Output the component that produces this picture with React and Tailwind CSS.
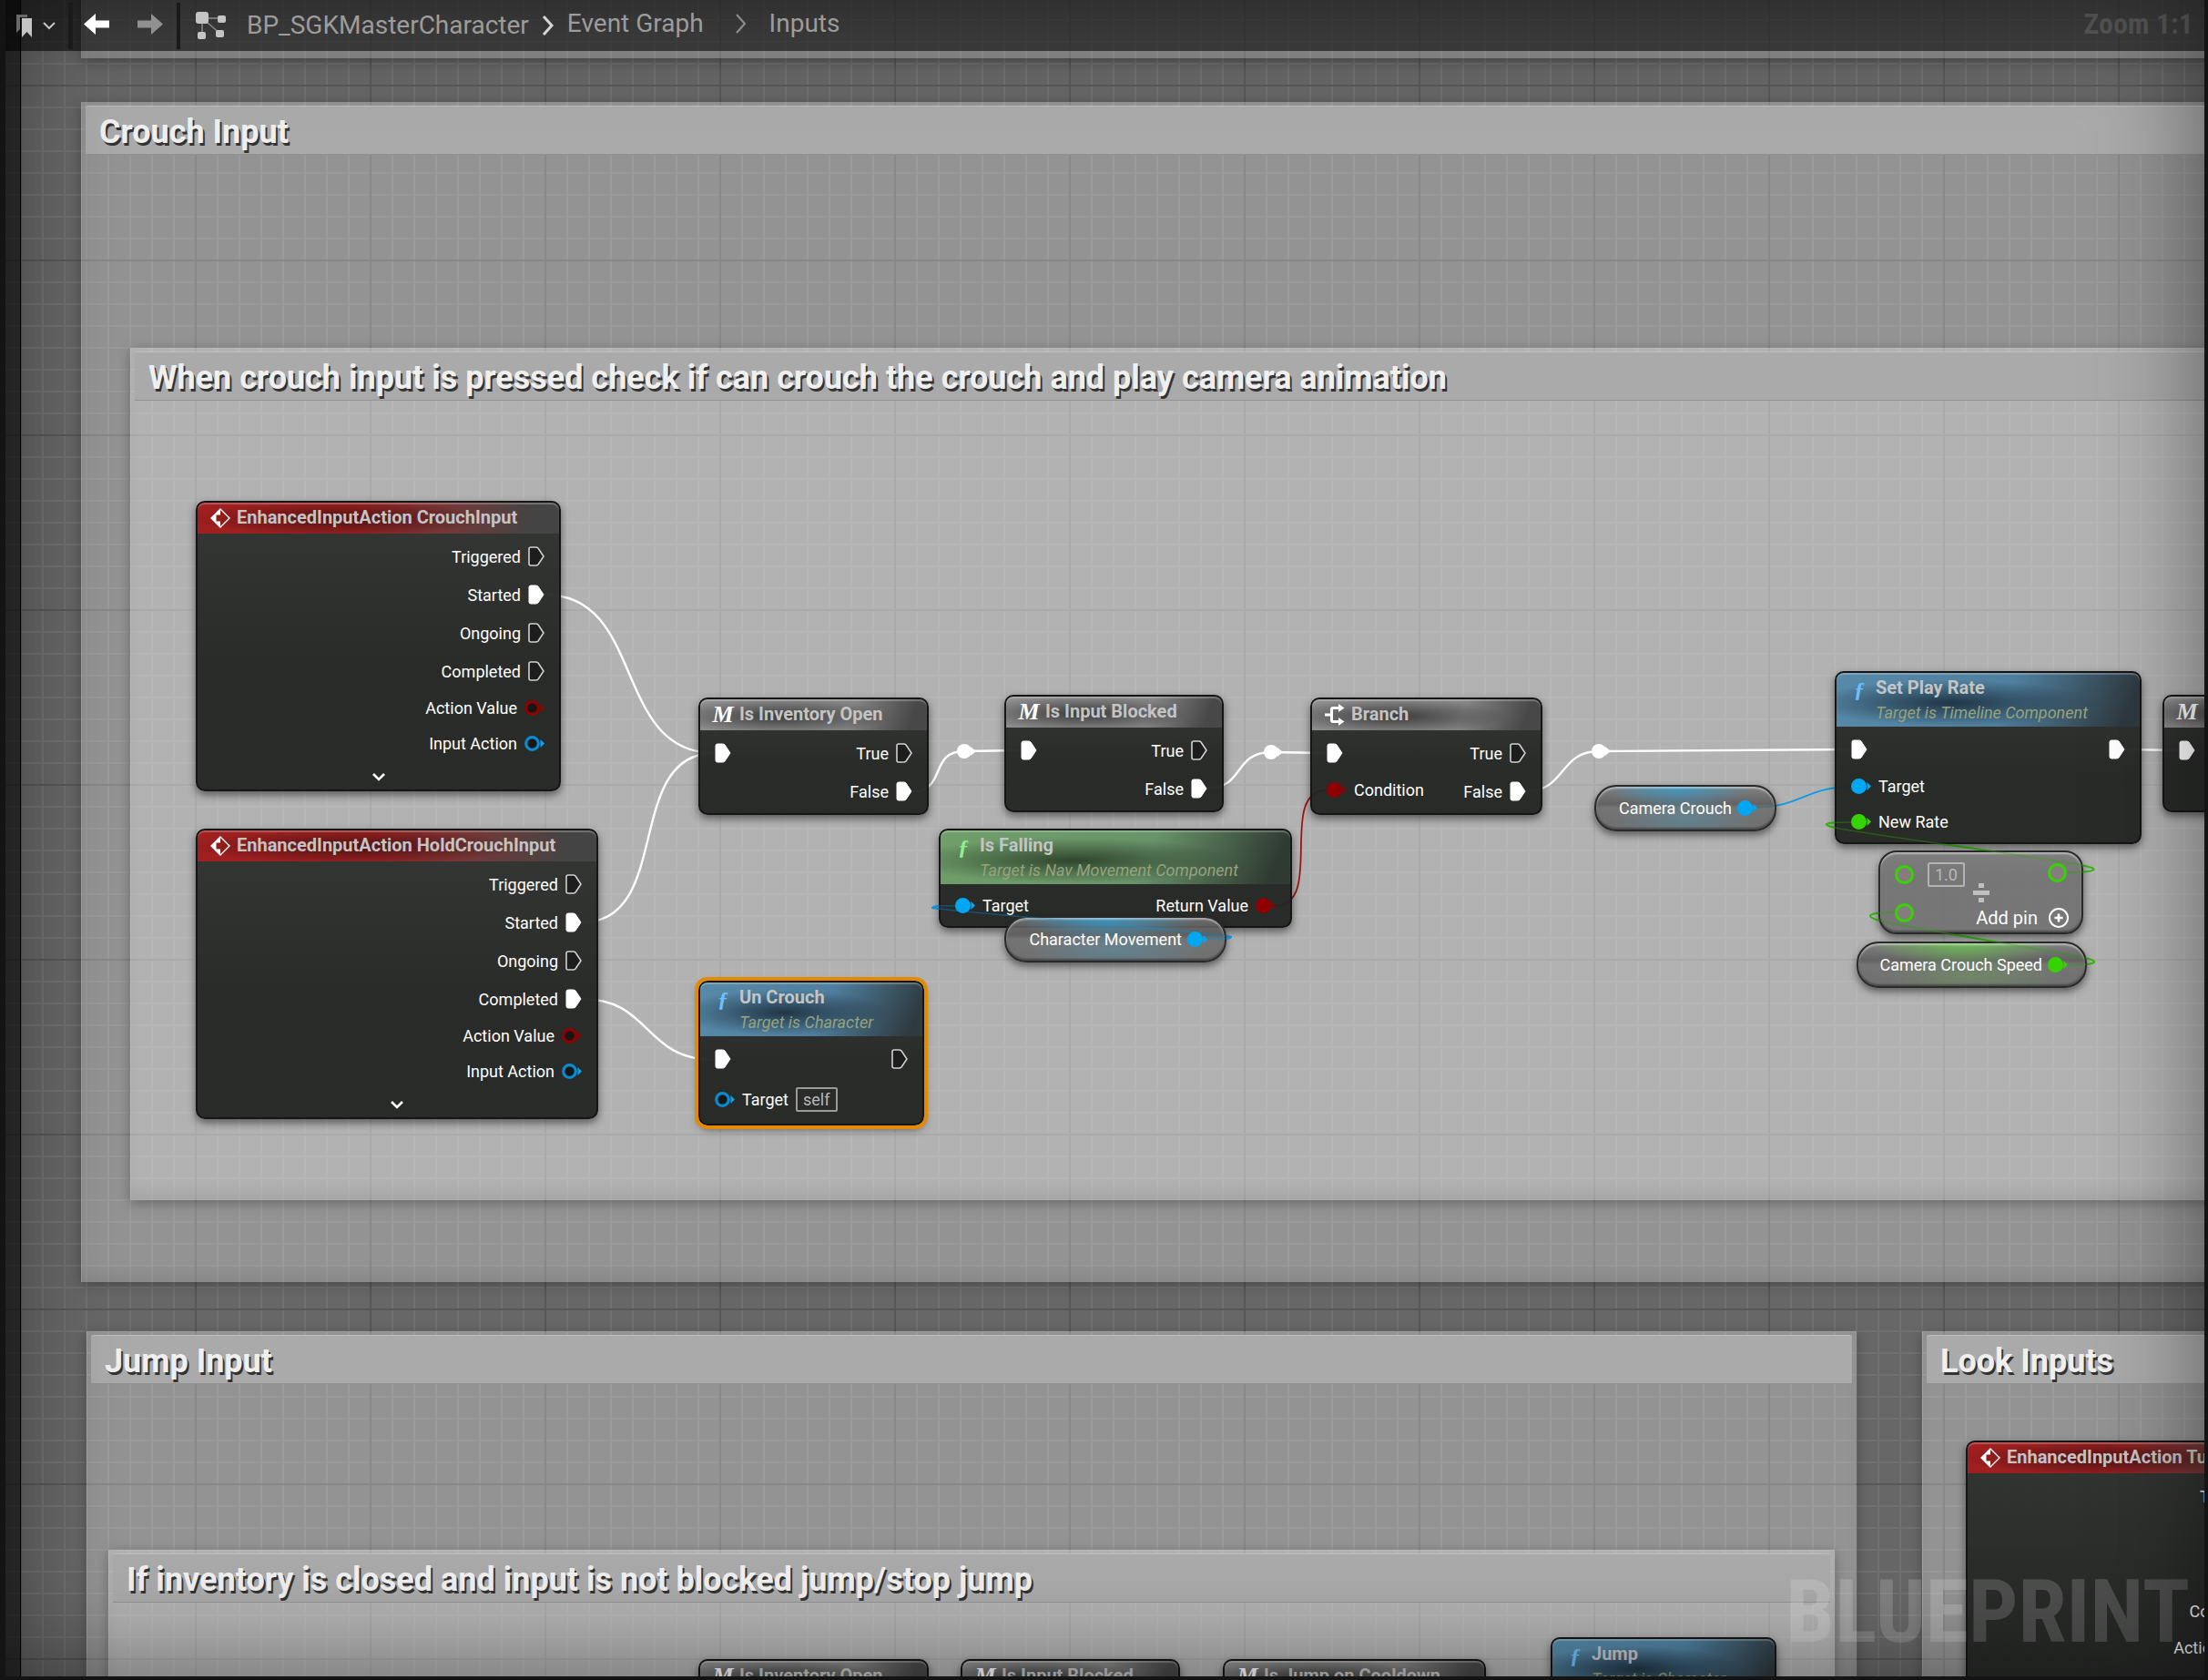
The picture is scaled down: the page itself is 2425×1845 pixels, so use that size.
import React from "react";

const comments = [
  { x: 89, y: -320, w: 2560, h: 384 },
  { title: "Crouch Input", x: 89, y: 112, w: 2560, h: 1296 },
  { title: "When crouch input is pressed check if can crouch the crouch and play camera animation", x: 143, y: 382, w: 2440, h: 936 },
  { title: "Jump Input", x: 95, y: 1462, w: 1944, h: 620 },
  { title: "If inventory is closed and input is not blocked jump/stop jump", x: 119, y: 1702, w: 1896, h: 340 },
  { title: "Look Inputs", x: 2111, y: 1462, w: 700, h: 620 },
];

const actionPins = (linked) => [
  ...["Triggered", "Started", "Ongoing", "Completed"].map((label) => ({
    label,
    kind: "exec",
    on: linked.includes(label),
  })),
  { label: "Action Value", kind: "red" },
  { label: "Input Action", kind: "blue" },
];

const trueFalse = [
  { label: "True", kind: "exec" },
  { label: "False", kind: "exec", on: true },
];

const execIn = { kind: "exec", on: true };

const nodes = [
  { id: "crouch", type: "event", title: "EnhancedInputAction CrouchInput", x: 215, y: 550, w: 401, right: actionPins(["Started"]) },
  { id: "hold", type: "event", title: "EnhancedInputAction HoldCrouchInput", x: 215, y: 910, w: 442, right: actionPins(["Started", "Completed"]) },
  { id: "turn", type: "event", title: "EnhancedInputAction TurnInput", x: 2159, y: 1582, w: 377, right: actionPins([]) },
  { id: "inv", type: "macro", title: "Is Inventory Open", x: 767, y: 766, w: 253, left: [execIn], right: trueFalse },
  { id: "blocked", type: "macro", title: "Is Input Blocked", x: 1103, y: 763, w: 241, left: [execIn], right: trueFalse },
  {
    id: "branch", type: "branch", title: "Branch", x: 1439, y: 766, w: 255,
    left: [execIn, { label: "Condition", kind: "red", on: true }],
    right: trueFalse,
  },
  {
    id: "rate", type: "func", title: "Set Play Rate", sub: "Target is Timeline Component", x: 2015, y: 737, w: 337,
    left: [execIn, { label: "Target", kind: "blue", on: true }, { label: "New Rate", kind: "green", on: true }],
    right: [{ kind: "exec", on: true }],
  },
  { id: "next", type: "macro", title: "Is Input Blocked", x: 2375, y: 763, w: 241, left: [execIn], right: trueFalse },
  {
    id: "falling", type: "pure", title: "Is Falling", sub: "Target is Nav Movement Component", x: 1031, y: 910, w: 388,
    left: [{ label: "Target", kind: "blue", on: true }],
    right: [{ label: "Return Value", kind: "red", on: true }],
  },
  {
    id: "uncrouch", type: "func", title: "Un Crouch", sub: "Target is Character", x: 767, y: 1077, w: 248, selected: true,
    left: [execIn, { label: "Target", kind: "blue", field: "self" }],
    right: [{ kind: "exec" }],
  },
  { id: "inv2", type: "macro", title: "Is Inventory Open", x: 767, y: 1822, w: 253, left: [execIn], right: trueFalse },
  { id: "blocked2", type: "macro", title: "Is Input Blocked", x: 1055, y: 1822, w: 241, left: [execIn], right: trueFalse },
  { id: "cooldown", type: "macro", title: "Is Jump on Cooldown", x: 1343, y: 1822, w: 289, left: [execIn], right: trueFalse },
  {
    id: "jump", type: "func", title: "Jump", sub: "Target is Character", x: 1703, y: 1798, w: 248,
    left: [execIn], right: [{ kind: "exec" }],
  },
];

const variables = [
  { label: "Character Movement", kind: "blue", x: 1103, y: 1006, w: 244 },
  { label: "Camera Crouch", kind: "blue", x: 1751, y: 862, w: 200 },
  { label: "Camera Crouch Speed", kind: "green", x: 2039, y: 1034, w: 253 },
];

const wires = [
  { color: "#ffffff", width: 2.4, d: "M598 653C710 653 672 827 785 827" },
  { color: "#ffffff", width: 2.4, d: "M639 1013C740 1013 684 827 785 827" },
  { color: "#ffffff", width: 2.4, d: "M639 1097C716 1097 706 1164 785 1164" },
  { color: "#ffffff", width: 2.4, d: "M1002 869C1040 869 1020 825 1059 825L1121 824" },
  { color: "#ffffff", width: 2.4, d: "M1326 866C1366 866 1355 826 1396 826L1457 827" },
  { color: "#ffffff", width: 2.4, d: "M1676 869C1720 869 1712 825 1756 825L2033 823" },
  { color: "#ffffff", width: 2.4, d: "M2334 823L2393 824" },
  { color: "#a01414", width: 1.8, d: "M1400 995C1456 995 1402 868 1457 868" },
  { color: "#0c9ce8", width: 1.8, d: "M1928 887C1975 887 1985 864 2033 864" },
];

// links that run backwards loop over the nodes, so they stay faintly visible on top
const loops = [
  { color: "#0c9ce8", d: "M1323 1031Q1352 1032 1352 1029C1340 1024 1040 1001 1024 997Q1024 994 1049 995" },
  { color: "#35b80c", d: "M2270 958C2304 958 2308 954 2285 950C2230 940 2080 920 2020 910C1996 905 2004 903 2033 903" },
  { color: "#35b80c", d: "M2270 1060C2306 1060 2308 1055 2285 1051C2230 1040 2120 1023 2068 1012C2044 1006 2052 1002 2081 1002" },
];

const knots = [[1059, 825], [1396, 826], [1756, 825]];

const headerTone = {
  event:
    "bg-[radial-gradient(ellipse_42%_55%_at_40%_52%,rgba(50,12,12,0.75),transparent),linear-gradient(100deg,#a01f1f_0%,#9a2222_45%,#6e3a3a_72%,#434443_92%)]",
  macro:
    "bg-[radial-gradient(ellipse_50%_55%_at_35%_55%,rgba(45,45,45,0.85),transparent),linear-gradient(110deg,#8e8e8e_0%,#858585_65%,#484848_92%)]",
  branch:
    "bg-[radial-gradient(ellipse_50%_55%_at_35%_55%,rgba(45,45,45,0.85),transparent),linear-gradient(110deg,#8e8e8e_0%,#858585_65%,#484848_92%)]",
  func:
    "bg-[radial-gradient(ellipse_48%_42%_at_38%_56%,rgba(28,45,60,0.9),transparent),linear-gradient(115deg,#5789a8_0%,#4f7f9e_55%,#2f3a40_94%)]",
  pure:
    "bg-[radial-gradient(ellipse_48%_42%_at_38%_56%,rgba(45,65,42,0.95),transparent),linear-gradient(115deg,#6f9f6a_0%,#69946a_58%,#2f3a32_94%)]",
};

const ringColor = { red: "#900000", blue: "#0a8bd0", green: "#35d400" };
const fillColor = { red: "#900000", blue: "#00a8f3", green: "#35d400" };

function ExecPin({ on }) {
  return (
    <svg width="18" height="22" viewBox="0 0 18 22" className="shrink-0">
      <path
        d="M1 3Q1 1 3 1H8.500Q10 1 11 2L17 11L11 20Q10 21 8.500 21H3Q1 21 1 19Z"
        fill={on ? "#fff" : "#1c1d1c"}
        stroke={on ? "#fff" : "#d0d0d0"}
        strokeWidth={on ? 1 : 1.6}
      />
    </svg>
  );
}

function DataPin({ kind, on }) {
  return (
    <svg width="22" height="17" viewBox="0 0 22 17" className="shrink-0">
      <path d="M17.500 4L22 8.500L17.500 13Z" fill={fillColor[kind]} />
      <circle
        cx="8.500"
        cy="8.500"
        r={on ? 8.5 : 6.8}
        fill={on ? fillColor[kind] : "#151716"}
        stroke={on ? "none" : ringColor[kind]}
        strokeWidth="3.200"
      />
    </svg>
  );
}

function Pin({ pin, side }) {
  const exec = pin.kind === "exec";
  return (
    <div
      className={`flex items-center gap-2 ${side === "right" ? "flex-row-reverse" : ""} ${
        exec ? "h-[42px]" : pin.field ? "h-[47px]" : "h-[39px]"
      }`}
    >
      {exec ? <ExecPin on={pin.on} /> : <DataPin kind={pin.kind} on={pin.on} />}
      {pin.label && <span>{pin.label}</span>}
      {pin.field && (
        <span className="flex h-[27px] items-center rounded-xs border-2 border-[#9a9a9a] px-[6px] text-[#b8b8b8]">
          {pin.field}
        </span>
      )}
    </div>
  );
}

function NodeIcon({ type }) {
  if (type === "event") {
    return (
      <svg width="22" height="22" viewBox="0 0 22 22" className="shrink-0">
        <path d="M11 1L21 11L11 21L1 11Z" fill="none" stroke="#fff" strokeWidth="1.400" />
        <path d="M11 1V7.500H6.500V14.500H11V21L1 11Z" fill="#fff" />
      </svg>
    );
  }
  if (type === "branch") {
    return (
      <svg width="22" height="24" viewBox="0 0 22 24" className="shrink-0" fill="none" stroke="#fff" strokeWidth="3">
        <path d="M0 12H7M16 4.500H9Q7.500 4.500 7.500 6V18Q7.500 19.500 9 19.500H16" />
        <path d="M15 0L21.500 4.500L15 9ZM15 15L21.500 19.500L15 24Z" fill="#fff" stroke="none" />
      </svg>
    );
  }
  if (type === "macro") {
    return (
      <span className="flex w-[22px] shrink-0 justify-center font-['Liberation_Serif',serif] text-[26px] leading-none font-bold text-white italic">
        M
      </span>
    );
  }
  return (
    <span
      className={`w-[22px] shrink-0 text-center font-['Liberation_Serif',serif] text-[24px] leading-none font-bold italic ${
        type === "pure" ? "text-[#8df08d]" : "text-[#6cc0fa]"
      }`}
    >
      ƒ
    </span>
  );
}

function Node({ node }) {
  return (
    <article
      className={`absolute rounded-[10px] border-2 border-[#141514] bg-linear-to-b from-[#303230]/96 to-[#222422]/95 to-60% shadow-[0_4px_10px_rgba(0,0,0,0.5)] ${
        node.selected ? "outline-4 outline-[#e38a00]" : ""
      }`}
      style={{ left: node.x, top: node.y, width: node.w }}
    >
      <header
        className={`flex gap-[7px] overflow-hidden rounded-t-lg pr-4 pl-[14px] shadow-[inset_0_2px_1px_rgba(255,255,255,0.25)] ${
          headerTone[node.type]
        } ${node.sub ? "h-[59px]" : "h-[34px]"}`}
      >
        <div className={`flex items-center ${node.sub ? "h-[36px]" : ""}`}>
          <NodeIcon type={node.type} />
        </div>
        <div className="pt-px whitespace-nowrap">
          <h3 className="text-[20px] leading-[30px] font-bold text-[#c4c4c4]">{node.title}</h3>
          {node.sub && <p className="text-[18px] leading-[26px] text-[#97a27c] italic">{node.sub}</p>}
        </div>
      </header>
      <div className="flex justify-between px-4 pt-1 pb-[3px] text-[18px] whitespace-nowrap text-white">
        <div>{node.left?.map((pin, i) => <Pin key={i} pin={pin} side="left" />)}</div>
        <div>{node.right?.map((pin, i) => <Pin key={i} pin={pin} side="right" />)}</div>
      </div>
      {node.type === "event" && (
        <button type="button" aria-label="Show more pins" className="flex h-7 w-full items-center justify-center">
          <svg width="14" height="9" viewBox="0 0 14 9" fill="none" stroke="#fff" strokeWidth="2.600">
            <path d="M1 1L7 7L13 1" />
          </svg>
        </button>
      )}
    </article>
  );
}

const pill =
  "absolute border-2 border-[#2a2a2a] shadow-[0_4px_9px_rgba(0,0,0,0.5),inset_0_2px_2px_rgba(255,255,255,0.45),inset_0_-2px_2px_rgba(0,0,0,0.35)]";

const pillTone = {
  blue: "bg-[radial-gradient(ellipse_42%_50%_at_46%_0%,rgba(60,150,195,0.95),transparent),radial-gradient(ellipse_40%_50%_at_50%_75%,rgba(80,150,180,0.45),transparent),linear-gradient(rgba(120,120,120,0.85),rgba(85,85,85,0.85)_40%,rgba(105,105,105,0.85)_50%,rgba(100,100,100,0.85))]",
  green: "bg-[radial-gradient(ellipse_42%_50%_at_46%_0%,rgba(105,190,80,0.95),transparent),radial-gradient(ellipse_40%_50%_at_50%_75%,rgba(110,160,90,0.45),transparent),linear-gradient(rgba(120,120,120,0.85),rgba(85,85,85,0.85)_40%,rgba(105,105,105,0.85)_50%,rgba(100,100,100,0.85))]",
};

function Variable({ item }) {
  return (
    <div
      className={`${pill} ${pillTone[item.kind]} flex h-[51px] items-center justify-end gap-[6px] rounded-3xl pr-[19px] text-[18px] whitespace-nowrap text-white`}
      style={{ left: item.x, top: item.y, width: item.w }}
    >
      <span>{item.label}</span>
      <DataPin kind={item.kind} on />
    </div>
  );
}

function RingPin() {
  return <span className="size-[21px] rounded-full border-[3px] border-[#35d400] bg-[#857d7d]" />;
}

function DivideNode() {
  return (
    <div
      className={`${pill} top-[934px] left-[2063px] flex h-[92px] w-[225px] justify-between rounded-[20px] bg-linear-to-b from-[#787878]/90 via-[#6c6c6c]/85 via-30% to-[#6c6c6c]/85 px-4`}
    >
      <div className="flex flex-col">
        <div className="flex h-[48px] items-center gap-[15px]">
          <RingPin />
          <input
            aria-label="Dividend"
            defaultValue="1.0"
            className="h-[27px] w-[41px] rounded-xs border-2 border-[#b4b4b4] bg-transparent text-center text-[18px] text-[#b8b8b8]"
          />
        </div>
        <div className="flex h-9 items-center">
          <RingPin />
        </div>
      </div>
      <svg width="18" height="21" viewBox="0 0 18 21" fill="#c0c0c0" className="absolute top-[34px] left-[102px]">
        <path d="M0 8H18V13H0ZM6 0H12V5H6ZM6 16H12V21H6Z" />
      </svg>
      <div className="flex flex-col items-end justify-between pb-1">
        <div className="flex h-[44px] items-center">
          <RingPin />
        </div>
        <button type="button" className="-mr-[2px] flex h-6 items-center gap-3 text-[20px] text-white">
          Add pin
          <svg width="22" height="22" viewBox="0 0 22 22" fill="none" stroke="#fff" strokeWidth="2">
            <circle cx="11" cy="11" r="10" />
            <path d="M11 6.500V15.500M6.500 11H15.500" strokeWidth="2.600" />
          </svg>
        </button>
      </div>
    </div>
  );
}

function Comment({ item }) {
  return (
    <section
      className="absolute bg-white/29 px-[5px] pt-1 shadow-[0_3px_12px_rgba(0,0,0,0.3),inset_0_-14px_20px_-8px_rgba(0,0,0,0.1),inset_1px_0_0_rgba(255,255,255,0.12)]"
      style={{ left: item.x, top: item.y, width: item.w, height: item.h }}
    >
      {item.title && (
        <div className="flex h-[54px] items-center rounded-t-[3px] border-t border-b border-t-[#bebebe] border-b-[#929292] bg-[#aaaaaa] px-[15px] pt-1">
          <h2 className="text-[36px] leading-none font-bold whitespace-nowrap text-[#efefef] [text-shadow:2px_3px_0_#333]">
            {item.title}
          </h2>
        </div>
      )}
    </section>
  );
}

function Toolbar() {
  return (
    <nav className="absolute inset-x-0 top-0 flex h-14 items-center bg-black/56 pr-4 pl-[18px] text-[28px] leading-none whitespace-nowrap text-[#9c9c9c]">
      <button type="button" aria-label="Bookmarks" className="flex items-center gap-3">
        <svg width="17" height="25" viewBox="0 0 17 25">
          <path d="M0 0H12V3H4V16L0 20Z" fill="#6a6a6a" />
          <path d="M6 4H17V25L11.500 19L6 25Z" fill="#c4c4c4" />
        </svg>
        <svg width="14" height="9" viewBox="0 0 14 9" fill="none" stroke="#c4c4c4" strokeWidth="2">
          <path d="M1 1L7 7L13 1" />
        </svg>
      </button>
      <span className="ml-[14px] h-[51px] w-[5px] bg-[#1a1a1a]" />
      <button type="button" aria-label="Back" className="ml-3 pb-1">
        <svg width="28" height="23" viewBox="0 0 28 23" fill="#fff">
          <path d="M0 11.500L13 0V7.500H28V15.500H13V23Z" />
        </svg>
      </button>
      <button type="button" aria-label="Forward" className="ml-[31px] pb-1">
        <svg width="28" height="23" viewBox="0 0 28 23" fill="#909090">
          <path d="M28 11.500L15 0V7.500H0V15.500H15V23Z" />
        </svg>
      </button>
      <span className="ml-[15px] h-[51px] w-1 bg-[#1a1a1a]" />
      <svg width="33" height="30" viewBox="0 0 33 30" fill="#c4c4c4" className="ml-[17px]">
        <path d="M7 6V24M7 7H28M7 7L27 24" stroke="#8a8a8a" strokeWidth="1.500" />
        <rect width="14" height="13" rx="3" />
        <rect x="24" y="4" width="9" height="8" rx="2" />
        <rect x="2" y="22" width="9" height="8" rx="2" />
        <rect x="22" y="20" width="9" height="8" rx="2" />
      </svg>
      <button type="button" className="ml-[23px] pb-px">BP_SGKMasterCharacter</button>
      <svg width="14" height="22" viewBox="0 0 14 22" fill="none" stroke="#d6d6d6" strokeWidth="3" className="ml-[14px]">
        <path d="M2 1L11 11L2 21" />
      </svg>
      <button type="button" className="ml-[14px] pb-1">Event Graph</button>
      <svg width="14" height="22" viewBox="0 0 14 22" fill="none" stroke="#909090" strokeWidth="2" className="mb-1 ml-[34px]">
        <path d="M2 1L11 11L2 21" />
      </svg>
      <button type="button" className="ml-6 pb-1">Inputs</button>
      <span className="ml-auto pb-[5px] font-['Roboto_Condensed','Liberation_Sans_Narrow',Roboto,sans-serif] text-[32px] font-bold text-white/12">
        Zoom 1:1
      </span>
    </nav>
  );
}

export default function App() {
  return (
    <main className="relative h-screen w-full overflow-hidden bg-[#676767] font-[Roboto,'Noto_Sans',sans-serif]">
      <svg className="absolute inset-0 size-full">
        <defs>
          <pattern id="minor" x="22" y="93" width="24" height="24" patternUnits="userSpaceOnUse">
            <path d="M0 0H24V2H2V24H0Z" fill="#717171" />
          </pattern>
          <pattern id="major" x="22" y="93" width="192" height="192" patternUnits="userSpaceOnUse">
            <path d="M0 0H192V2H2V192H0Z" fill="#585858" />
          </pattern>
        </defs>
        <rect width="100%" height="100%" fill="url(#minor)" />
        <rect width="100%" height="100%" fill="url(#major)" />
      </svg>

      {comments.map((item, i) => (
        <Comment key={i} item={item} />
      ))}

      <svg className="absolute inset-0 size-full" fill="none">
        {wires.map((wire) => (
          <path key={wire.d} d={wire.d} stroke={wire.color} strokeWidth={wire.width} />
        ))}
        {loops.map((wire) => (
          <path key={wire.d} d={wire.d} stroke={wire.color} strokeWidth="2" />
        ))}
        {knots.map(([x, y]) => (
          <g key={x} fill="#fff">
            <path d={`M${x + 7} ${y - 5}L${x + 13} ${y}L${x + 7} ${y + 5}Z`} />
            <circle cx={x} cy={y} r="8" />
          </g>
        ))}
      </svg>

      {nodes.map((node) => (
        <Node key={node.id} node={node} />
      ))}
      <DivideNode />
      {variables.map((item) => (
        <Variable key={item.label} item={item} />
      ))}

      <svg className="pointer-events-none absolute inset-0 size-full opacity-35" fill="none">
        {loops.map((wire) => (
          <path key={wire.d} d={wire.d} stroke={wire.color} strokeWidth="1.500" />
        ))}
      </svg>

      <p className="absolute right-5 bottom-[27px] font-['Roboto_Condensed','Liberation_Sans_Narrow',Roboto,sans-serif] text-[96px] leading-none font-bold text-white/17">
        BLUEPRINT
      </p>

      <div className="pointer-events-none absolute inset-y-0 left-0 w-[23px] border-r border-black bg-black/55" />
      <div className="pointer-events-none absolute inset-0 shadow-[inset_0_0_120px_rgba(0,0,0,0.5)]" />
      <Toolbar />
      <div className="pointer-events-none absolute inset-0 border-r-4 border-b-4 border-l-6 border-[#141414]" />
    </main>
  );
}
